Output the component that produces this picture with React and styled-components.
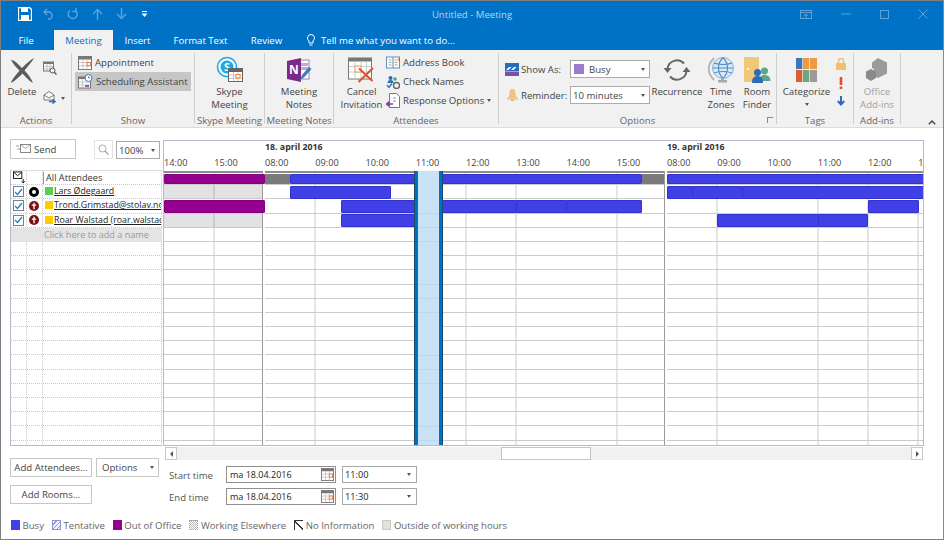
import React from 'react';
import styled, { createGlobalStyle } from 'styled-components';

const Global = createGlobalStyle`
  html, body { margin: 0; padding: 0; background: #fff; }
  * { box-sizing: border-box; }
  body { font-family: "Open Sans", "Liberation Sans", sans-serif; font-size: 9.6px; color: #444; }
`;

const Win = styled.div`
  width: 944px; height: 540px; overflow: hidden; background: #fff;
  border: 1px solid #7f7f7f; border-right-color: #6f8fae;
  display: flex; flex-direction: column;
`;
const Head = styled.header`background: #0072c6; height: 49px; display: flex; flex-direction: column;`;
const TitleRow = styled.div`height: 29px; display: grid; grid-template-columns: 1fr 200px 1fr; align-items: center;`;
const Qat = styled.div`display: flex; align-items: center; height: 29px; padding: 0 0 3px 17px;`;
const QatBtn = styled.span`display: flex; width: 24.5px; justify-content: flex-start; align-items: center;`;
const TitleText = styled.div`text-align: center; color: #b5d5ee; font-size: 9.6px; padding: 0 0 3px 0;`;
const Controls = styled.div`display: flex; justify-content: flex-end; align-items: center; padding: 0 15px 3px 0; gap: 29px;`;
const Tabs = styled.nav`height: 20px; display: flex; align-items: stretch; padding-left: 17px; color: #fff;`;
const Tab = styled.div`
  display: flex; align-items: center; justify-content: center; font-size: 9.6px; white-space: nowrap;
  width: ${p => p.$w}px; margin-right: ${p => p.$mr || 0}px;
  ${p => p.$active ? 'background:#f1f1f1;color:#0072c6;' : ''}
`;
const TellMe = styled.div`display:flex;align-items:center;gap:6px;font-size:9.6px;`;

const Ribbon = styled.section`
  height: 78px; background: #f1f1f1; border-bottom: 1px solid #dcdcdc; display: flex; padding: 3px 0 3px 0; position: relative;
`;
const Group = styled.div`
  width: ${p => p.$w}px; border-right: 1px solid #cfcfcf; display: flex; flex-direction: column;
`;
const GroupBody = styled.div`flex: 1; display: flex; min-height: 0; padding: ${p => p.$pad || '0'};`;
const GroupLabel = styled.div`height: 11px; line-height: 15px; text-align: center; color: #666; font-size: 9.6px; white-space: nowrap; position: relative;`;
const Large = styled.div`
  width: ${p => p.$w}px; display: flex; flex-direction: column; align-items: center; text-align: center;
  font-size: 9.6px; line-height: 13px; color: ${p => p.$dim ? '#a0a0a0' : '#444'}; white-space: nowrap;
`;
const LargeIcon = styled.div`height: 31px; margin-top: 1px; display: flex; align-items: center; justify-content: center;`;
const Small = styled.div`
  height: 19px; display: flex; align-items: center; gap: 3px; padding-left: 3px; white-space: nowrap; color: #444; font-size: 9.6px;
  ${p => p.$on ? 'background:#c6c6c6;' : ''}
`;
const SmallCol = styled.div`display: flex; flex-direction: column; width: ${p => p.$w}px; padding-top: ${p => p.$top || 0}px;`;
const Caret = styled.i`
  display: inline-block; width: 0; height: 0; border-left: 2.5px solid transparent; border-right: 2.5px solid transparent;
  border-top: 3px solid #555; margin-left: ${p => p.$ml || 0}px;
`;
const OptRow = styled.div`height: 26px; display: flex; align-items: center;`;
const OptLabel = styled.span`width: 49px; color: #444; font-size: 9.6px; white-space: nowrap;`;
const OptIcon = styled.span`width: 16px; display: flex; justify-content: center; margin-right: 1px;`;
const RibSelect = styled.div`
  width: 80px; height: 18px; border: 1px solid #ababab; background: #fff; display: flex; align-items: center;
  padding: 0 4px 0 2px; color: #444; font-size: 9.6px; justify-content: space-between;
`;
const Swatch = styled.span`display: inline-block; width: 10px; height: 10px; background: #9a7bd0; margin: 0 5px 0 1px; vertical-align: -1px;`;
const Launcher = styled.span`position: absolute; right: 3px; top: 4px; width: 6px; height: 6px; border-left: 1px solid #888; border-top: 1px solid #888;`;
const Collapse = styled.span`position: absolute; right: 7px; bottom: 2px; display:flex;`;

const Main = styled.main`flex: 1; display: flex; flex-direction: column; padding: 11px 0 0 9px;`;
const Columns = styled.div`display: flex;`;
const LeftCol = styled.div`width: 153px; flex: none; display: flex; flex-direction: column;`;
const RightCol = styled.div`width: 761px; flex: none; display: flex; flex-direction: column; padding-top: 1px;`;
const Toolbar = styled.div`height: 31px; display: flex; align-items: flex-start;`;
const SendBtn = styled.div`
  width: 66px; height: 20px; border: 1px solid #c6c6c6; display: flex; align-items: center; gap: 3px; padding-left: 5px; color: #444; font-size: 9.6px;
`;
const SearchBtn = styled.div`
  width: 19px; height: 19px; margin: 1px 3px 0 18px; border: 1px solid #e2e2e2; display: flex; align-items: center; justify-content: center;
`;
const ZoomSel = styled.div`
  width: 44px; height: 18px; margin-top: 2px; border: 1px solid #ababab; display: flex; align-items: center; justify-content: space-between; padding: 0 4px 0 2px; color: #444; font-size: 9.6px;
`;
const List = styled.div`
  width: 152px; height: 276px; overflow: hidden; border-left: 1px solid #b4bccc; border-bottom: 1px solid #b4bccc; border-top: 1px solid #d8dce4;
`;
const Row = styled.div`
  height: 14.2px; display: grid; grid-template-columns: 16px 16px 1fr; border-bottom: 1px dotted #c9c9c9;
`;
const AddRow = styled.div`height: 14.2px; background: #e4e4e4; color: #9a9a9a; padding-left: 33px; line-height: 13px; font-size: 9.1px; white-space: nowrap;`;
const Cell = styled.div`
  border-right: 1px dotted #c9c9c9; display: flex; align-items: center; min-width: 0; overflow: hidden; padding-left: ${p => p.$pl ?? 2}px;
`;
const Check = styled.span`
  width: 11px; height: 11px; border: 1px solid #73808f; background: #fff; display: flex; align-items: center; justify-content: center;
`;
const Dot = styled.span`width: 8px; height: 8px; background: ${p => p.$c}; flex: none; margin: 2px 1px 0 1px; align-self: flex-start;`;
const Name = styled.span`font-size: 8.8px; color: #222; text-decoration: underline; white-space: nowrap; line-height: 13px;`;
const AllAtt = styled.span`font-size: 9.2px; color: #333; white-space: nowrap; border-left: 1px solid #999; padding-left: 2px; margin-left: -1px; line-height: 12px;`;

const THead = styled.div`
  height: 31px; display: flex; border: 1px solid #b4bccc; border-bottom: 0; width: 761px;
`;
const THeadDay = styled.div`width: ${p => p.$w}px; flex: none; display: flex; flex-direction: column;`;
const DateLabel = styled.div`height: 15px; font-size: 8.8px; font-weight: 700; color: #333; line-height: 13px; white-space: nowrap;`;
const Hours = styled.div`display: flex; overflow: hidden;`;
const HourLabel = styled.div`width: 50.25px; flex: none; font-size: 9.2px; color: #444; line-height: 13px;`;
const TBody = styled.div`
  height: 275px; position: relative; overflow: hidden; display: flex; width: 761px;
  border-left: 1px solid #b4bccc; border-right: 1px solid #b4bccc; border-bottom: 1px solid #b4bccc;
`;
const DayCol = styled.div`
  width: ${p => p.$w}px; flex: none; margin-right: ${p => p.$gap || 0}px;
  border-right: ${p => p.$gap ? '1px solid #9a9a9a' : '0'};
  background-image: repeating-linear-gradient(90deg, transparent 0, transparent 49.25px, #cbcbcb 49.25px, #cbcbcb 50.25px);
  background-position: 0.5px 0;
`;
const Lane = styled.div`
  height: 14.2px; position: relative; border-bottom: 1px solid #cbcbcb;
  ${p => p.$off ? 'background:rgba(0,0,0,.115);' : ''}
  ${p => p.$top ? 'border-top:2px solid #8c8c8c;' : ''}
`;
const Bar = styled.div`
  position: absolute; top: ${p => p.$sum ? '1px' : '0.5px'}; height: ${p => p.$sum ? '10px' : '13px'};
  background: ${p => p.$kind === 'oof' ? '#96008f' : p.$kind === 'sum' ? '#7a7a7a' : '#4040e6'};
  border: ${p => p.$kind === 'sum' ? '0' : `1px solid ${p.$kind === 'oof' ? '#860080' : '#3232cc'}`};
  border-radius: ${p => p.$kind === 'sum' ? '0' : '1px'};
`;
const Selection = styled.div`
  position: absolute; left: 250px; width: 29px; top: -1px; bottom: 0;
  border: 1px solid #1d4a6a; border-bottom: 0;
  box-shadow: inset 3px 0 0 #0072c6, inset -3px 0 0 #0072c6;
  background-color: #c9e2f5;
  background-image: repeating-linear-gradient(180deg, transparent 0, transparent 13.6px, #bcd8ee 13.6px, #bcd8ee 14.2px);
`;
const Scroll = styled.div`height: 13px; margin: 1px 1px 0 2px; background: #f1f1f1; position: relative; display: flex; justify-content: space-between;`;
const ScrollBtn = styled.div`width: 12px; height: 13px; background: #fff; border: 1px solid #c8c8c8; display:flex; align-items:center; justify-content:center;`;
const Thumb = styled.div`position: absolute; left: 336px; width: 90px; height: 13px; background: #fff; border: 1px solid #c4c4c4;`;
const Arrow = styled.i`
  width: 0; height: 0; border-top: 3px solid transparent; border-bottom: 3px solid transparent;
  ${p => p.$r ? 'border-left: 3px solid #555;' : 'border-right: 3px solid #555;'}
`;
const Buttons = styled.div`display: grid; grid-template-columns: 82px 63px; gap: 8px 4px; margin-top: 12px;`;
const Btn = styled.div`
  height: 19px; border: 1px solid #c6c6c6; display: flex; align-items: center; justify-content: ${p => p.$between ? 'space-between' : 'center'};
  padding: ${p => p.$between ? '0 4px 0 5px' : '0'}; color: #444; font-size: 9.6px; white-space: nowrap;
`;
const TimeForm = styled.div`display: grid; grid-template-columns: 57px 110px 75px; column-gap: 0; row-gap: 5px; margin: 6px 0 0 6px;`;
const TimeLabel = styled.div`font-size: 9.6px; color: #555; display: flex; align-items: center; height: 17px; padding-top: 2px;`;
const DateBox = styled.div`
  height: 17px; border: 1px solid #8f8f8f; background: #fff; display: flex; align-items: center; justify-content: space-between;
  color: #222; font-size: 9px; padding: 0 1px 0 3px;
`;
const TimeBox = styled.div`
  height: 17px; width: 75px; margin-left: 6px; border: 1px solid #a8a8a8; background: #fff; display: flex; align-items: center; justify-content: space-between;
  color: #222; font-size: 9.2px; padding: 0 5px 0 2px;
`;
const Legend = styled.footer`display: flex; align-items: center; gap: 8px; margin-top: 13px; padding-left: 1px; height: 14px; color: #666; font-size: 9.6px;`;
const LegendItem = styled.span`display: flex; align-items: center; gap: 2.5px; white-space: nowrap;`;
const LegendBox = styled.span`
  width: 9px; height: 10px; display: inline-block; background: ${p => p.$c || '#fff'};
  border: 1px solid ${p => p.$b || p.$c || '#999'};
`;
const TentativeBox = styled(LegendBox)`
  background: repeating-linear-gradient(135deg, #f4f4ff 0, #f4f4ff 2px, #8f8fe0 2px, #8f8fe0 3px);
`;
const ElsewhereBox = styled(LegendBox)`
  border: 1px dotted #999;
  background: repeating-conic-gradient(#bbb 0 25%, #fff 0 50%) 0 0 / 2px 2px;
`;
const NoInfoBox = styled(LegendBox)`
  border: 0; border-top: 1px solid #333; border-left: 1px solid #333;
  background: linear-gradient(45deg, transparent 44%, #333 44%, #333 58%, transparent 58%);
`;

const Cal = ({ s = 14 }) => (
  <svg width={s} height={s} viewBox="0 0 14 14">
    <rect x=".5" y=".5" width="13" height="13" fill="#fff" stroke="#777" />
    <rect x="1" y="1" width="12" height="2.5" fill="#777" />
    <path d="M1 6.500h12M1 9.800h12M4.800 3.500v10M9 3.500v10" stroke="#bbb" strokeWidth=".8" />
    <rect x="9" y="6.500" width="3.400" height="3.300" fill="#fff" stroke="#e8803a" />
  </svg>
);
const IconX = () => (
  <svg width="27" height="28" viewBox="0 0 27 28"><path d="M2 4c3 0 5 2 11 8 5-5 8-8 12-10-2 4-6 8-9.500 12.500C19 18 22 22 24 27c-4-2-7-6-10.500-9.500C10 21 6 25 2 27c1-4 5-8 8.500-12.500C7 11 4 8 2 4z" fill="#5c5c5c"/></svg>
);
const IconCalSearch = () => (
  <svg width="14" height="14" viewBox="0 0 14 14"><rect x=".5" y="1" width="10" height="9" fill="#fff" stroke="#777"/><rect x="1" y="1" width="9" height="2" fill="#777"/><path d="M1 5.500h9M1 8h9M4 3v7M7 3v7" stroke="#aaa" strokeWidth=".7"/><circle cx="9.500" cy="9.500" r="2.500" fill="#f1f1f1" stroke="#555"/><path d="M11.300 11.300L13.500 13.500" stroke="#555" strokeWidth="1.300"/></svg>
);
const IconMove = () => (
  <svg width="14" height="14" viewBox="0 0 14 14"><path d="M1 5l5-3.500L11 5v5H1z" fill="#fff" stroke="#777"/><path d="M1 5l5 3 5-3" fill="none" stroke="#777"/><path d="M6 11.500h5M9.500 9.500l2.500 2-2.500 2" fill="none" stroke="#2b6cb8" strokeWidth="1.500"/></svg>
);
const IconSched = () => (
  <svg width="15" height="15" viewBox="0 0 15 15"><rect x=".5" y="3" width="12" height="11" fill="#fff" stroke="#777"/><rect x="1" y="3" width="11" height="2" fill="#777"/><path d="M1 8h11M1 11h11M4.500 5v9" stroke="#bbb" strokeWidth=".8"/><rect x="7" y="11" width="4" height="2" fill="#8f5fb5"/><circle cx="10.500" cy="4" r="3.500" fill="#fff" stroke="#3d7ab8"/><path d="M10.500 2v2h2" stroke="#3d7ab8" fill="none" strokeWidth=".8"/></svg>
);
const IconSkype = () => (
  <svg width="28" height="28" viewBox="0 0 28 28">
    <circle cx="11" cy="11" r="9.500" fill="#fff" stroke="#19a9e5" strokeWidth="1.600"/>
    <circle cx="11" cy="11" r="6.500" fill="#19a9e5"/>
    <text x="11" y="15" fontSize="11" fontWeight="700" textAnchor="middle" fill="#fff" fontFamily="Open Sans">S</text>
    <g transform="translate(12 12)"><rect x=".5" y=".5" width="14" height="13" fill="#fff" stroke="#666"/><rect x="1" y="1" width="13" height="3" fill="#666"/><path d="M1 7h13M1 10.300h13M5.500 4v9M10 4v9" stroke="#bbb" strokeWidth=".8"/><rect x="8" y="6.500" width="4" height="3.500" fill="#fff" stroke="#e8803a"/></g>
  </svg>
);
const IconNote = () => (
  <svg width="26" height="26" viewBox="0 0 26 26">
    <rect x="9" y="3" width="14" height="19" fill="#fff" stroke="#a77bb5"/>
    <path d="M13 6h9v3h-9zM13 10h9v3h-9z" fill="#c9a6d2"/>
    <path d="M1 4l14-3v24L1 22z" fill="#7a2b87"/>
    <text x="8" y="17" fontSize="12" fontWeight="700" textAnchor="middle" fill="#fff" fontFamily="Open Sans">N</text>
    <path d="M14 23l2-5 7-8 2.500 2-7 8z" fill="#3d7ab8"/>
  </svg>
);
const IconCancel = () => (
  <svg width="27" height="28" viewBox="0 0 27 28">
    <rect x=".5" y="2" width="23" height="21" fill="#fff" stroke="#777"/>
    <rect x="1" y="2" width="22" height="3.500" fill="#777"/>
    <path d="M1 10.500h22M1 16h22M7 5.500v17M13 5.500v17M18.500 5.500v17" stroke="#ccc"/>
    <rect x="7" y="10" width="6" height="6" fill="#fff" stroke="#ef9a5d"/>
    <path d="M11 12.500l13.500 12.500M25 12L10.500 26" stroke="#d9532c" strokeWidth="2"/>
  </svg>
);
const IconBook = () => (
  <svg width="14" height="14" viewBox="0 0 14 14"><rect x=".5" y="1" width="13" height="11" fill="#fff" stroke="#5f8fb9"/><path d="M7 1v11" stroke="#5f8fb9"/><path d="M2.500 4h3M2.500 6.500h3M2.500 9h3M8.500 4h3M8.500 6.500h3M8.500 9h3" stroke="#8f8f8f" strokeWidth=".8"/><rect x="12.500" y="2" width="1.500" height="3" fill="#d9532c"/></svg>
);
const IconNames = () => (
  <svg width="14" height="14" viewBox="0 0 14 14"><circle cx="4.500" cy="3" r="2" fill="#2b6cb8"/><circle cx="9" cy="4" r="1.800" fill="#57a37a"/><path d="M1.500 8c0-2 1-3 3-3s3 1 3 3z" fill="#2b6cb8"/><path d="M1 10l2 2.500L6 8.500" fill="none" stroke="#2b6cb8" strokeWidth="1.300"/><circle cx="10.500" cy="10.500" r="3" fill="none" stroke="#666" strokeWidth="1.400"/></svg>
);
const IconResp = () => (
  <svg width="14" height="15" viewBox="0 0 14 15"><path d="M3.500.5h7l3 3v11h-10z" fill="#fff" stroke="#777"/><path d="M7 5h3M7 8h3" stroke="#777" strokeWidth=".8"/><path d="M0 11h7M3.500 8.500L.5 11l3 2.500" fill="none" stroke="#7a3fa0" strokeWidth="1.500"/></svg>
);
const IconShowAs = () => (
  <svg width="14" height="13" viewBox="0 0 14 13"><rect width="14" height="8.500" fill="#2b6cb8"/><rect y="9" width="14" height="4" fill="#7a4fa8"/><path d="M1 7l3-3h2.500l-3 3M6 7l3-3h2.500l-3 3" fill="#fff"/></svg>
);
const IconBell = () => (
  <svg width="11" height="12" viewBox="0 0 11 12"><path d="M5.500 0C3 0 2.500 2 2.500 4.500S1.500 8 .5 9h10c-1-1-2-2-2-4.500S8 0 5.500 0z" fill="#f2c27c"/><rect x="0" y="9.500" width="11" height="1" fill="#e8b05f"/><rect x="4" y="10.500" width="3" height="1.500" fill="#e8b05f"/></svg>
);
const IconRecur = () => (
  <svg width="28" height="26" viewBox="0 0 28 26">
    <path d="M4.500 12A9.500 9.500 0 0 1 21 6.500" fill="none" stroke="#666" strokeWidth="2"/>
    <path d="M23.500 14A9.500 9.500 0 0 1 7 19.500" fill="none" stroke="#666" strokeWidth="2"/>
    <path d="M0.500 11h8L4.500 16zM27.500 15h-8l4-5z" fill="#666"/>
  </svg>
);
const IconGlobe = () => (
  <svg width="26" height="28" viewBox="0 0 26 28">
    <path d="M6 2C-1 9-1 17 6 24" fill="none" stroke="#b3b3b3" strokeWidth="2"/>
    <circle cx="15" cy="12" r="10.500" fill="#d8e8f6" stroke="#8eb4da"/>
    <path d="M6 7c5 2 13 2 18 0M5 12h20M6 17c5-2 13-2 18 0M15 1.500c-6 6-6 15 0 21M15 1.500c6 6 6 15 0 21" stroke="#4f8bc7" strokeWidth="1.100" fill="none"/>
    <rect x="10" y="24" width="9" height="2.500" fill="#a9a9a9"/>
    <rect x="13" y="22" width="3" height="2" fill="#a9a9a9"/>
  </svg>
);
const IconRoom = () => (
  <svg width="27" height="26" viewBox="0 0 27 26">
    <rect x="0" y="0" width="15" height="25" fill="#f0c878"/>
    <circle cx="4" cy="12" r="1" fill="#fff"/>
    <circle cx="20.500" cy="14" r="3.500" fill="#5fa58a"/>
    <path d="M15 24c0-4 2-6 5.500-6s6 2 6 6z" fill="#5fa58a"/>
    <circle cx="13.500" cy="15.500" r="3.500" fill="#2b6cb8"/>
    <path d="M8 26c0-5 2-7 5.500-7s5.500 2 5.500 7z" fill="#2b6cb8"/>
  </svg>
);
const IconCat = () => (
  <svg width="21" height="24" viewBox="0 0 21 24">
    <rect width="6.300" height="11" fill="#3f76b5"/><rect x="7" width="6.300" height="11" fill="#ee9a44"/><rect x="14" width="7" height="11" fill="#ee9a44"/>
    <rect y="12" width="6.300" height="12" fill="#dc5c35"/><rect x="7" y="12" width="6.300" height="12" fill="#6aa87c"/><rect x="14" y="12" width="7" height="12" fill="#9a9a9a"/>
  </svg>
);
const IconAdd = () => (
  <svg width="24" height="24" viewBox="0 0 24 24"><path d="M13 0l9 4.500v11L13 20l-4-2v-7l-2-1V4.500z" fill="#9a9a9a"/><path d="M6 11l5 2.500V20l-5 3-5-3v-6.500z" fill="#8a8a8a"/></svg>
);

const bars = {
  0: [
    [[0, 101, 'oof']],
    [[0, 25, 'sum'], [25, 352, 'busy'], [377, 22, 'sum']],
    [[0, 257, 'busy']],
  ],
  1: [[], [[25, 101, 'busy']], [[0, 25.5, 'busy'], [25, 50.5, 'busy'], [75, 182, 'busy']]],
  2: [
    [[0, 101, 'oof']],
    [[75.5, 176, 'busy'], [251, 50.5, 'busy'], [301, 76, 'busy']],
    [[201, 50.5, 'busy']],
  ],
  3: [[], [[75.5, 76, 'busy']], [[50, 101.5, 'busy'], [151, 50, 'busy']]],
};
const days = [
  { w: 99, gap: 2, hours: ['14:00', '15:00'], off: [1, 3] },
  { w: 400, gap: 2, hours: ['08:00', '09:00', '10:00', '11:00', '12:00', '13:00', '14:00', '15:00'], date: '18. april 2016' },
  { w: 257, hours: ['08:00', '09:00', '10:00', '11:00', '12:00', '13:00'], date: '19. april 2016' },
];
const people = [
  { n: 'Lars Ødegaard', c: '#55d055', st: 'o' },
  { n: 'Trond.Grimstad@stolav.no', c: '#ffcc00', st: 'x' },
  { n: 'Roar Walstad (roar.walstad@stolav.no)', c: '#ffcc00', st: 'x' },
];
const laneCount = 20;

const Status = ({ k }) => k === 'o'
  ? <svg width="10" height="10" viewBox="0 0 10 10"><circle cx="5" cy="5" r="3.500" fill="#fff" stroke="#000" strokeWidth="3"/></svg>
  : <svg width="10" height="10" viewBox="0 0 10 10"><circle cx="5" cy="5" r="5" fill="#7d1010"/><path d="M5 1.800v6.400M2.800 4.200h4.400" stroke="#fff" strokeWidth="1.300"/></svg>;

export default function App() {
  return (
    <Win>
      <Global />
      <Head>
        <TitleRow>
          <Qat>
            <QatBtn>
              <svg width="14" height="14" viewBox="0 0 14 14"><path d="M.5.500h11l2 2v11H.500z" fill="none" stroke="#fff" strokeWidth="1.300"/><rect x="3" y="1" width="7" height="4" fill="#fff"/><rect x="3" y="8" width="8" height="5" fill="#fff"/></svg>
            </QatBtn>
            <QatBtn><svg width="12" height="12" viewBox="0 0 12 12"><path d="M4 1L1 4l3 3M1 4h6a4 4 0 0 1 0 7H5" fill="none" stroke="#5da3da" strokeWidth="1.400"/></svg></QatBtn>
            <QatBtn><svg width="12" height="12" viewBox="0 0 12 12"><path d="M3 2.500a4.500 4.500 0 1 0 6 .5M9 0v3.500H5.500" fill="none" stroke="#5da3da" strokeWidth="1.400"/></svg></QatBtn>
            <QatBtn><svg width="11" height="12" viewBox="0 0 11 12"><path d="M5.500 12V1.500M1 6l4.500-4.500L10 6" fill="none" stroke="#5da3da" strokeWidth="1.400"/></svg></QatBtn>
            <QatBtn><svg width="11" height="12" viewBox="0 0 11 12"><path d="M5.500 0v10.500M1 6l4.500 4.500L10 6" fill="none" stroke="#5da3da" strokeWidth="1.400"/></svg></QatBtn>
            <QatBtn><svg width="7" height="6" viewBox="0 0 7 6"><path d="M1 .5h5" stroke="#fff"/><path d="M.5 2.500h6L3.500 6z" fill="#fff"/></svg></QatBtn>
          </Qat>
          <TitleText>Untitled - Meeting</TitleText>
          <Controls>
            <svg width="12" height="9" viewBox="0 0 12 9"><rect x=".5" y=".5" width="11" height="8" fill="none" stroke="#5da3da"/><path d="M.5 2.500h11M6 8V4M4 6l2-2 2 2" fill="none" stroke="#5da3da"/></svg>
            <svg width="10" height="2" viewBox="0 0 10 2"><path d="M0 1h10" stroke="#5da3da"/></svg>
            <svg width="9" height="9" viewBox="0 0 9 9"><rect x=".5" y=".5" width="8" height="8" fill="none" stroke="#5da3da"/></svg>
            <svg width="10" height="10" viewBox="0 0 10 10"><path d="M.5.500l9 9M9.500.500l-9 9" stroke="#5da3da"/></svg>
          </Controls>
        </TitleRow>
        <Tabs>
          <Tab $w={16} $mr={20}>File</Tab>
          <Tab $w={59} $mr={12} $active>Meeting</Tab>
          <Tab $w={25} $mr={24}>Insert</Tab>
          <Tab $w={53} $mr={24}>Format Text</Tab>
          <Tab $w={31} $mr={25}>Review</Tab>
          <TellMe>
            <svg width="8" height="13" viewBox="0 0 8 13"><path d="M4 .5a3.500 3.500 0 0 0-2 6.400V9h4V6.900A3.500 3.500 0 0 0 4 .5zM2.500 11h3" fill="none" stroke="#fff"/></svg>
            Tell me what you want to do...
          </TellMe>
        </Tabs>
      </Head>

      <Ribbon>
        <Group $w={71}>
          <GroupBody>
            <Large $w={42}><LargeIcon><IconX /></LargeIcon>Delete</Large>
            <SmallCol $w={28} $top={8}>
              <div style={{ height: 29 }}><IconCalSearch /></div>
              <div><IconMove /><Caret $ml={4} style={{ verticalAlign: 4 }} /></div>
            </SmallCol>
          </GroupBody>
          <GroupLabel>Actions</GroupLabel>
        </Group>
        <Group $w={123}>
          <GroupBody $pad="0 3px 0 3px">
            <SmallCol $w={116}>
              <Small><Cal />Appointment</Small>
              <Small $on><IconSched />Scheduling Assistant</Small>
            </SmallCol>
          </GroupBody>
          <GroupLabel>Show</GroupLabel>
        </Group>
        <Group $w={70}>
          <GroupBody><Large $w={69}><LargeIcon><IconSkype /></LargeIcon>Skype<br />Meeting</Large></GroupBody>
          <GroupLabel>Skype Meeting</GroupLabel>
        </Group>
        <Group $w={69}>
          <GroupBody><Large $w={68}><LargeIcon><IconNote /></LargeIcon>Meeting<br />Notes</Large></GroupBody>
          <GroupLabel>Meeting Notes</GroupLabel>
        </Group>
        <Group $w={165}>
          <GroupBody $pad="0 0 0 6px">
            <Large $w={43}><LargeIcon><IconCancel /></LargeIcon>Cancel<br />Invitation</Large>
            <SmallCol $w={110} $top={0}>
              <Small><IconBook />Address Book</Small>
              <Small><IconNames />Check Names</Small>
              <Small><IconResp />Response Options<Caret $ml={0} /></Small>
            </SmallCol>
          </GroupBody>
          <GroupLabel>Attendees</GroupLabel>
        </Group>
        <Group $w={278}>
          <GroupBody $pad="0 0 0 5px">
            <SmallCol $w={147} $top={3}>
              <OptRow>
                <OptIcon><IconShowAs /></OptIcon><OptLabel>Show As:</OptLabel>
                <RibSelect><span><Swatch />Busy</span><Caret /></RibSelect>
              </OptRow>
              <OptRow>
                <OptIcon><IconBell /></OptIcon><OptLabel>Reminder:</OptLabel>
                <RibSelect><span>10 minutes</span><Caret /></RibSelect>
              </OptRow>
            </SmallCol>
            <Large $w={52}><LargeIcon><IconRecur /></LargeIcon>Recurrence</Large>
            <Large $w={36}><LargeIcon><IconGlobe /></LargeIcon>Time<br />Zones</Large>
            <Large $w={36}><LargeIcon><IconRoom /></LargeIcon>Room<br />Finder</Large>
          </GroupBody>
          <GroupLabel>Options<Launcher /></GroupLabel>
        </Group>
        <Group $w={77}>
          <GroupBody $pad="0 0 0 1px">
            <Large $w={57}><LargeIcon><IconCat /></LargeIcon>Categorize<Caret style={{ marginTop: 5 }} /></Large>
            <SmallCol $w={16} $top={5} style={{ paddingLeft: 1 }}>
              <div style={{ height: 19 }}><svg width="10" height="12" viewBox="0 0 10 12"><path d="M2.500 5V3a2.500 2.500 0 0 1 5 0v2" fill="none" stroke="#f0c070" strokeWidth="1.500"/><rect y="5" width="10" height="7" fill="#f0c070"/></svg></div>
              <div style={{ height: 19, paddingLeft: 3 }}><svg width="4" height="12" viewBox="0 0 4 12"><rect x=".7" width="2.600" height="8" fill="#dd4f30"/><rect x=".7" y="9.500" width="2.600" height="2.500" fill="#dd4f30"/></svg></div>
              <div style={{ paddingLeft: 1 }}><svg width="8" height="10" viewBox="0 0 8 10"><path d="M4 0v8M.8 5L4 8.500 7.200 5" fill="none" stroke="#2b6cb8" strokeWidth="2"/></svg></div>
            </SmallCol>
          </GroupBody>
          <GroupLabel>Tags</GroupLabel>
        </Group>
        <Group $w={47}>
          <GroupBody><Large $w={46} $dim><LargeIcon><IconAdd /></LargeIcon>Office<br />Add-ins</Large></GroupBody>
          <GroupLabel>Add-ins</GroupLabel>
        </Group>
        <Collapse><svg width="8" height="5" viewBox="0 0 8 5"><path d="M.8 4.200L4 1l3.200 3.200" fill="none" stroke="#444" strokeWidth="1.400"/></svg></Collapse>
      </Ribbon>

      <Main>
        <Columns>
          <LeftCol>
            <Toolbar>
              <SendBtn>
                <svg width="15" height="10" viewBox="0 0 15 10"><rect x="4.500" y=".5" width="10" height="8" fill="#fff" stroke="#888"/><path d="M4.500.500l5 4 5-4M0 2h3M1 5h3" fill="none" stroke="#888" strokeWidth=".8"/></svg>
                Send
              </SendBtn>
              <SearchBtn>
                <svg width="11" height="11" viewBox="0 0 11 11"><circle cx="4.500" cy="4.500" r="3.500" fill="none" stroke="#aaa"/><path d="M7 7l3.500 3.500" stroke="#aaa" strokeWidth="1.500"/></svg>
              </SearchBtn>
              <ZoomSel>100%<Caret /></ZoomSel>
            </Toolbar>
            <List>
              <Row>
                <Cell $pl={2}><svg width="14" height="13" viewBox="0 0 14 13"><rect x=".5" y=".5" width="9" height="7" fill="#fff" stroke="#111"/><path d="M.5.500l4.500 4 4.500-4" fill="none" stroke="#111"/><path d="M11 8v4M9.500 10.500L11 12.500l1.500-2" stroke="#111" fill="none"/></svg></Cell>
                <Cell />
                <Cell $pl={1}><AllAtt>All Attendees</AllAtt></Cell>
              </Row>
              {people.map(p => (
                <Row key={p.n}>
                  <Cell $pl={2}>
                    <Check><svg width="9" height="8" viewBox="0 0 9 8"><path d="M1 4l2.500 2.500L8 1" fill="none" stroke="#2f78bd" strokeWidth="1.300"/></svg></Check>
                  </Cell>
                  <Cell $pl={2}><Status k={p.st} /></Cell>
                  <Cell $pl={1}><Dot $c={p.c} /><Name>{p.n}</Name></Cell>
                </Row>
              ))}
              <AddRow>Click here to add a name</AddRow>
              {Array.from({ length: 15 }, (_, i) => (
                <Row key={i}><Cell /><Cell /><Cell /></Row>
              ))}
            </List>
            <Buttons>
              <Btn>Add Attendees...</Btn>
              <Btn $between>Options<Caret /></Btn>
              <Btn>Add Rooms...</Btn>
            </Buttons>
          </LeftCol>
          <RightCol>
            <THead>
              {days.map((d, i) => (
                <THeadDay key={i} $w={d.w + (d.gap || 0)}>
                  <DateLabel>{d.date || '\u00a0'}</DateLabel>
                  <Hours>{d.hours.map((h, j) => <HourLabel key={j}>{h}</HourLabel>)}</Hours>
                </THeadDay>
              ))}
            </THead>
            <TBody>
              {days.map((d, di) => (
                <DayCol key={di} $w={d.w} $gap={d.gap}>
                  {Array.from({ length: laneCount }, (_, li) => (
                    <Lane key={li} $top={li === 0} $off={d.off && d.off.includes(li)}>
                      {(bars[li] ? bars[li][di] : []).map(([x, w, kind], k) => (
                        <Bar key={k} $kind={kind} $sum={li === 0} style={{ left: x, width: w, zIndex: 1 }} />
                      ))}
                    </Lane>
                  ))}
                </DayCol>
              ))}
              <Selection style={{ zIndex: 2 }} />
            </TBody>
            <Scroll>
              <ScrollBtn><Arrow /></ScrollBtn>
              <Thumb />
              <ScrollBtn><Arrow $r /></ScrollBtn>
            </Scroll>
            <TimeForm>
              <TimeLabel>Start time</TimeLabel>
              <DateBox>ma 18.04.2016<Cal s={13} /></DateBox>
              <TimeBox>11:00<Caret /></TimeBox>
              <TimeLabel>End time</TimeLabel>
              <DateBox>ma 18.04.2016<Cal s={13} /></DateBox>
              <TimeBox>11:30<Caret /></TimeBox>
            </TimeForm>
          </RightCol>
        </Columns>
        <Legend>
          <LegendItem><LegendBox $c="#4040e6" />Busy</LegendItem>
          <LegendItem><TentativeBox $b="#8f8fd8" />Tentative</LegendItem>
          <LegendItem><LegendBox $c="#96008f" />Out of Office</LegendItem>
          <LegendItem><ElsewhereBox />Working Elsewhere</LegendItem>
          <LegendItem><NoInfoBox />No Information</LegendItem>
          <LegendItem><LegendBox $c="#e2e2e2" $b="#c8c8c8" />Outside of working hours</LegendItem>
        </Legend>
      </Main>
    </Win>
  );
}
